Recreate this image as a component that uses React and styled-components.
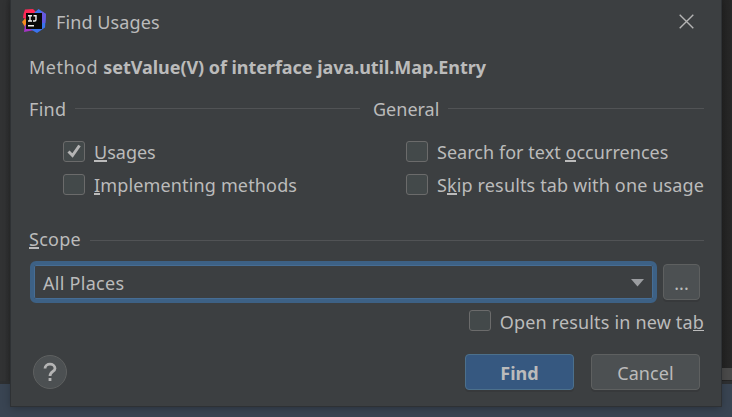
import React from 'react';
import styled, { createGlobalStyle } from 'styled-components';

const GlobalStyle = createGlobalStyle`
  * { box-sizing: border-box; }
  body { margin: 0; background: #2b2b2b; overflow: hidden; }
  button { font: inherit; color: inherit; padding: 0; }
`;

const Desktop = styled.div`
  position: relative;
  width: 732px;
  height: 417px;
  overflow: hidden;
  background: linear-gradient(90deg, #313233 0 5px, #2a2b2c 11px, #2b2b2b 12px 720px, #222222 721px, #282828 732px);
  font-family: 'Noto Sans', 'Open Sans', sans-serif;
  font-size: 18px;
  line-height: 24px;
  color: #bbbbbb;
`;

const ToolStrip = styled.div`
  position: absolute;
  right: 0;
  top: 368px;
  width: 12px;
  height: 12px;
  background: #4a4a4a;
`;

const StatusBar = styled.div`
  position: absolute;
  left: 0;
  right: 0;
  bottom: 0;
  height: 36px;
  background: #394452;
  border-top: 3px solid #2e3032;
`;

const Dialog = styled.main`
  position: relative;
  display: flex;
  flex-direction: column;
  width: 710px;
  height: 406px;
  margin-left: 11px;
  background: #3c3f41;
  box-shadow: 0 0 0 1px #2e3134, 0 2px 8px rgba(0, 0, 0, 0.3);
`;

const TitleBar = styled.header`
  display: flex;
  align-items: center;
  height: 42px;
  padding: 0 27px 0 11px;
`;

const Title = styled.h1`
  flex: 1;
  margin: 2px 0 0 10px;
  font-size: inherit;
  font-weight: 400;
`;

const CloseButton = styled.button`
  display: flex;
  border: 0;
  background: none;
`;

const Label = styled.span`
  white-space: pre;
  font-weight: ${(p) => (p.$bold ? 700 : 400)};
  letter-spacing: ${(p) => p.$track || 0}px;
`;

const Mnemonic = styled.span`
  display: inline-block;
  height: ${(p) => (p.$thin ? 21 : 22)}px;
  vertical-align: top;
  box-shadow: inset 0 ${(p) => (p.$thin ? -1 : -2)}px 0 #bbbbbb;
`;

const Subject = styled.div`
  display: flex;
  height: 24px;
  margin: 13px 0 0 18px;
`;

const Groups = styled.div`
  display: grid;
  grid-template-columns: 331px 331px;
  column-gap: 13px;
  margin: 18px 0 0 18px;
`;

const Group = styled.section`
  display: flex;
  flex-direction: column;
`;

const GroupHeader = styled.div`
  display: flex;
  align-items: center;
  gap: 9px;
  height: 24px;
`;

const Rule = styled.div`
  flex: 1;
  height: 1px;
  margin-bottom: 1px;
  background: #515355;
`;

const Options = styled.div`
  display: flex;
  flex-direction: column;
  gap: 9px;
  margin: 19px 0 0 ${(p) => p.$indent}px;
`;

const Option = styled.label`
  display: flex;
  align-items: center;
  gap: 9px;
  height: 24px;
`;

const Box = styled.span`
  display: flex;
  flex: none;
  width: 22px;
  height: 21px;
  margin-bottom: 1px;
  border: 1px solid #6b6b6b;
  border-radius: 3px;
  background: #43494a;
`;

const ScopeHeader = styled(GroupHeader)`
  margin: 30px 17px 0 18px;

  ${Rule} {
    margin: 2px 0 0;
  }
`;

const ScopeRow = styled.div`
  display: flex;
  align-items: center;
  gap: 6px;
  height: 42px;
  margin: 10px 0 0 19px;
`;

const Combo = styled.div`
  display: flex;
  align-items: center;
  justify-content: space-between;
  width: 627px;
  height: 42px;
  padding: 2px 9px 0;
  border: 4px solid #3d6185;
  border-radius: 6px;
  box-shadow: inset 0 0 0 1px #466d94;
`;

const PushButton = styled.button`
  display: flex;
  align-items: center;
  justify-content: center;
  width: ${(p) => p.$width}px;
  height: 36px;
  padding-top: 2px;
  border: 1px solid ${(p) => (p.$primary ? '#4c708c' : '#5e6060')};
  border-radius: 4px;
  background: ${(p) => (p.$primary ? '#365880' : '#4c5052')};
  box-shadow: 0 2px 0 #37393b;
`;

const TabOption = styled(Option)`
  align-self: flex-end;
  margin: 7px 17px 0 0;

  ${Box} {
    margin-bottom: 3px;
  }
`;

const Footer = styled.footer`
  display: flex;
  align-items: center;
  gap: 17px;
  height: 36px;
  margin: 20px 21px 0 22px;
`;

const HelpButton = styled.button`
  display: flex;
  width: 34px;
  height: 34px;
  margin-right: auto;
  align-items: center;
  justify-content: center;
  border: 1px solid #5e6060;
  border-radius: 50%;
  background: #4c5052;
`;

const Logo = () => (
  <svg width="24" height="24" viewBox="0 0 24 24">
    <path d="M0 13 3 9.500 8 15 3 18Z" fill="#f68b1f" />
    <path d="M3 .5 11 0 15 4 10 12 1 9 1.500 5Z" fill="#fe2857" />
    <path d="M3 16 12 12 15 20 10 21.500 2 23Z" fill="#a435c4" />
    <path d="M12 4 16.500 0 24 5 23 18.500 15 24 8 20Z" fill="#3973ee" />
    <path d="M19 1.800 24 5 23.300 14 19 14Z" fill="#6658df" />
    <rect x="4" y="4" width="16" height="16" fill="#080808" />
    <path d="M6 6.700h4M8 6.700v5.300M6 12h4M11.500 6.700H14v3.800q0 1.500-1.300 1.500H11M6 16.800h6" fill="none" stroke="#eeeeee" strokeWidth="1.400" />
  </svg>
);

const Check = () => (
  <svg width="20" height="19" viewBox="0 0 20 19">
    <path d="M4.500 9.500 8.500 13.500 15.500 3.500" fill="none" stroke="#b4b4b4" strokeWidth="3" />
  </svg>
);

const CheckOption = ({ row: Row = Option, checked, thin, track, before = '', hot, after = '' }) => (
  <Row>
    <Box>{checked && <Check />}</Box>
    <Label $track={track}>{before}<Mnemonic $thin={thin}>{hot}</Mnemonic>{after}</Label>
  </Row>
);

export default function App() {
  return (
    <Desktop>
      <GlobalStyle />
      <ToolStrip />
      <StatusBar />
      <Dialog>
        <TitleBar>
          <Logo />
          <Title><Label $track={0.1}>Find Usages</Label></Title>
          <CloseButton aria-label="Close">
            <svg width="15" height="15" viewBox="0 0 15 15">
              <path d="M.7.7 14.300 14.300M14.300.7.7 14.300" stroke="#b4b4b4" strokeWidth="1.400" />
            </svg>
          </CloseButton>
        </TitleBar>
        <Subject>
          <Label $track={0.5}>Method </Label>
          <Label $bold $track={-0.05}>setValue(V) of interface java.util.Map.Entry</Label>
        </Subject>
        <Groups>
          <Group>
            <GroupHeader><Label $track={0.3}>Find</Label><Rule /></GroupHeader>
            <Options $indent={34}>
              <CheckOption checked hot="U" after="sages" />
              <CheckOption track={0.15} hot="I" after="mplementing methods" />
            </Options>
          </Group>
          <Group>
            <GroupHeader><Label>General</Label><Rule /></GroupHeader>
            <Options $indent={33}>
              <CheckOption track={0.04} before="Search for text " hot="o" after="ccurrences" />
              <CheckOption track={0.14} before="S" hot="k" after="ip results tab with one usage" />
            </Options>
          </Group>
        </Groups>
        <ScopeHeader><Label $track={0.25}><Mnemonic>S</Mnemonic>cope</Label><Rule /></ScopeHeader>
        <ScopeRow>
          <Combo>
            <Label $track={0.28}>All Places</Label>
            <svg width="13" height="8" viewBox="0 0 13 8"><path d="M0 0H13L6.500 7.500Z" fill="#9b9da0" /></svg>
          </Combo>
          <PushButton $width={37}><Label>...</Label></PushButton>
        </ScopeRow>
        <CheckOption row={TabOption} thin track={0.17} before="Open results in new ta" hot="b" />
        <Footer>
          <HelpButton aria-label="Help">
            <svg width="14" height="20" viewBox="0 0 14 20">
              <path d="M2 6.500C2 .7 12 .7 12 6.500 12 9.500 7 9.500 7 14M7 16v3" fill="none" stroke="#b4b4b4" strokeWidth="2.800" />
            </svg>
          </HelpButton>
          <PushButton $width={109} $primary><Label $bold>Find</Label></PushButton>
          <PushButton $width={109}><Label $track={0.1}>Cancel</Label></PushButton>
        </Footer>
      </Dialog>
    </Desktop>
  );
}
